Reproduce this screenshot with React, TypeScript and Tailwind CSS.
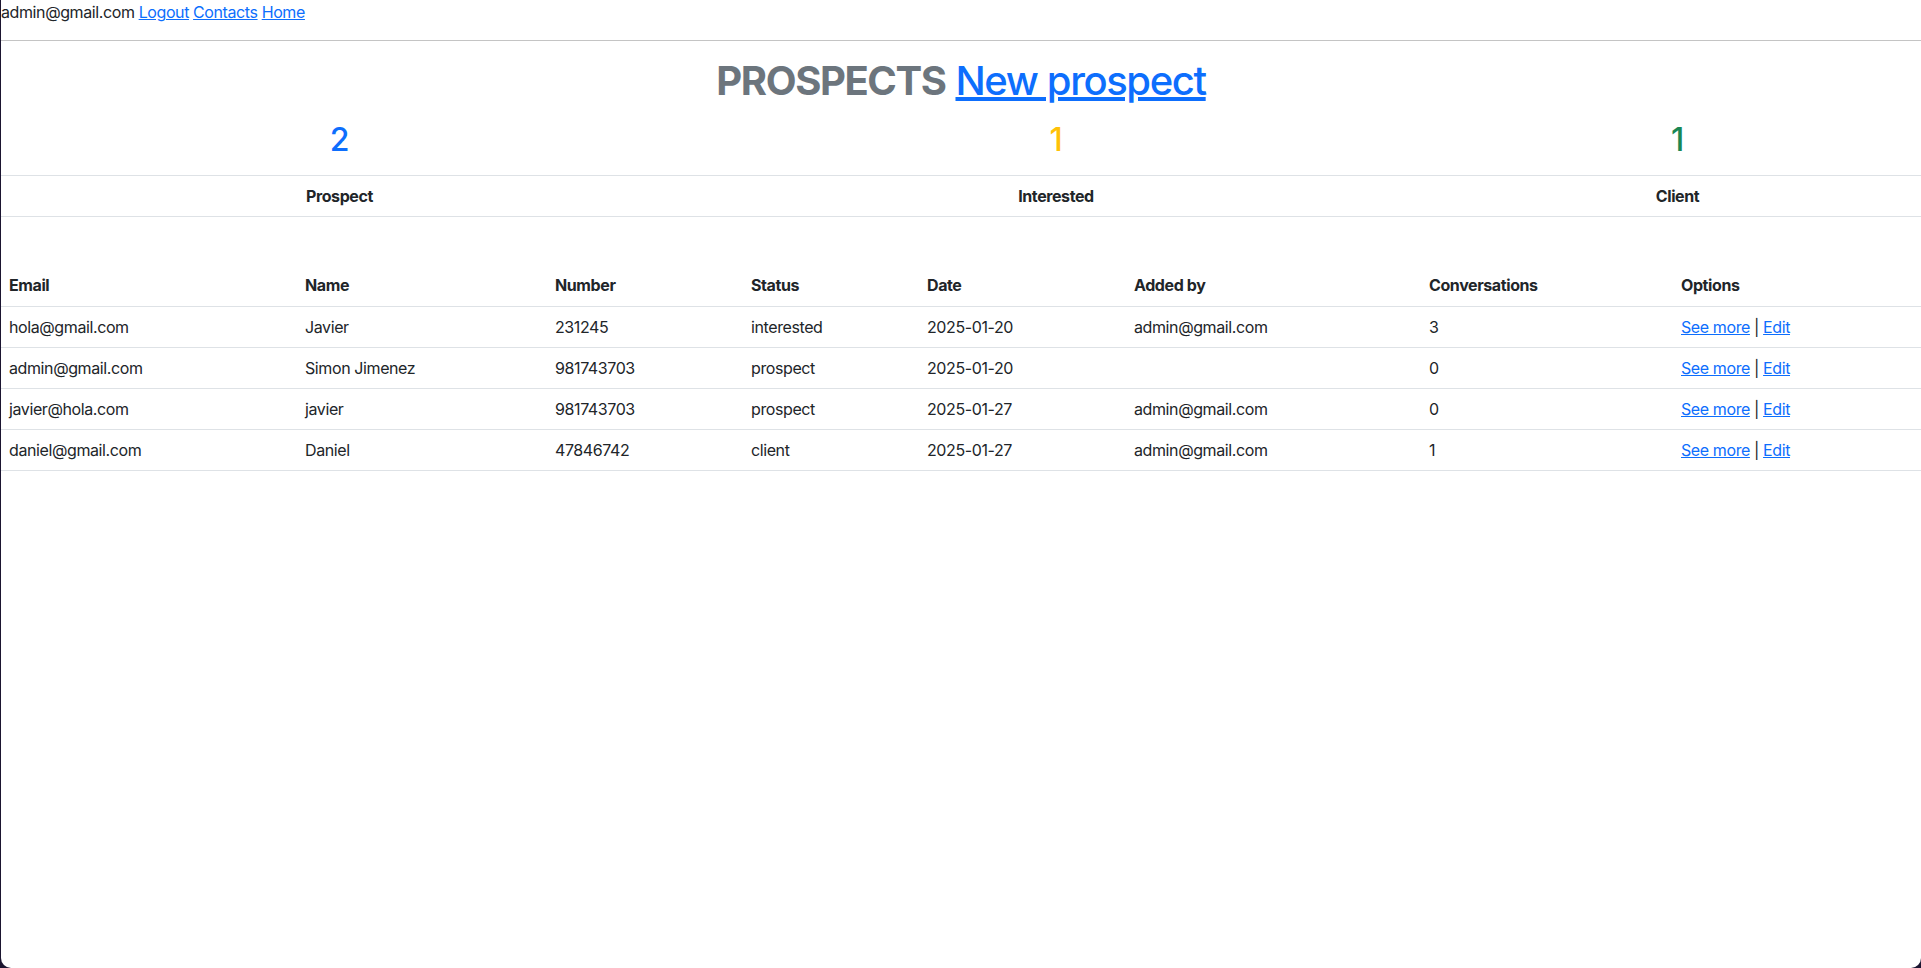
import React from "react";

const counts = [
  { value: 2, label: "Prospect", color: "text-[#0d6efd]", width: "w-[677px]" },
  { value: 1, label: "Interested", color: "text-[#ffc107]", width: "w-[756px]" },
  { value: 1, label: "Client", color: "text-[#198754]", width: "w-[487px]" },
];

const columns = [
  { title: "Email", width: "w-[296px]" },
  { title: "Name", width: "w-[250px]" },
  { title: "Number", width: "w-[196px]" },
  { title: "Status", width: "w-[176px]" },
  { title: "Date", width: "w-[207px]" },
  { title: "Added by", width: "w-[295px]" },
  { title: "Conversations", width: "w-[252px]" },
  { title: "Options", width: "w-[248px]" },
];

const prospects = [
  { email: "hola@gmail.com", name: "Javier", number: "231245", status: "interested", date: "2025-01-20", addedBy: "admin@gmail.com", conversations: 3 },
  { email: "admin@gmail.com", name: "Simon Jimenez", number: "981743703", status: "prospect", date: "2025-01-20", addedBy: "", conversations: 0 },
  { email: "javier@hola.com", name: "javier", number: "981743703", status: "prospect", date: "2025-01-27", addedBy: "admin@gmail.com", conversations: 0 },
  { email: "daniel@gmail.com", name: "Daniel", number: "47846742", status: "client", date: "2025-01-27", addedBy: "admin@gmail.com", conversations: 1 },
];

export default function App() {
  return (
    <div className="h-[968px] bg-[#1b1530] pl-px" style={{ fontFamily: "Inter, 'Noto Sans', sans-serif" }}>
      <div className="h-full bg-white rounded-b-[10px] text-[16px] leading-6 tracking-[-0.025em] text-[#212529]">
        {/* Top nav */}
        <div className="h-6">
          admin@gmail.com{" "}
          <a href="#" className="text-[#0d6efd] underline">Logout</a>{" "}
          <a href="#" className="text-[#0d6efd] underline">Contacts</a>{" "}
          <a href="#" className="text-[#0d6efd] underline">Home</a>
        </div>
        <hr className="mt-4 border-t border-[#c4c4c4]" />

        {/* Title */}
        <h1 className="mt-4 mb-2 text-center text-[40px] leading-[48px] tracking-[-0.035em]">
          <span className="font-bold text-[#6c757d]">PROSPECTS</span>{" "}
          <a href="#" className="font-medium text-[#0d6efd] underline">New prospect</a>
        </h1>

        {/* Counters */}
        <table className="table-fixed w-full border-collapse">
          <thead>
            <tr className="border-b border-[#dee2e6]">
              {counts.map((c) => (
                <th key={c.label} className={`${c.width} py-2 font-medium`}>
                  <div className={`${c.color} text-[32px] leading-[38px] mb-2`}>{c.value}</div>
                </th>
              ))}
            </tr>
          </thead>
          <tbody>
            <tr className="border-b border-[#dee2e6]">
              {counts.map((c) => (
                <th key={c.label} className="h-[41px] px-2 font-bold text-center">{c.label}</th>
              ))}
            </tr>
          </tbody>
        </table>

        {/* Prospects table */}
        <table className="table-fixed w-full border-collapse mt-12">
          <thead>
            <tr className="border-b border-[#dee2e6]">
              {columns.map((c) => (
                <th key={c.title} className={`${c.width} h-[41px] px-2 text-left font-bold`}>{c.title}</th>
              ))}
            </tr>
          </thead>
          <tbody>
            {prospects.map((p, i) => (
              <tr key={i} className="border-b border-[#dee2e6]">
                <td className="h-[41px] px-2">{p.email}</td>
                <td className="h-[41px] px-2">{p.name}</td>
                <td className="h-[41px] px-2">{p.number}</td>
                <td className="h-[41px] px-2">{p.status}</td>
                <td className="h-[41px] px-2">{p.date}</td>
                <td className="h-[41px] px-2">{p.addedBy}</td>
                <td className="h-[41px] px-2">{p.conversations}</td>
                <td className="h-[41px] px-2">
                  <a href="#" className="text-[#0d6efd] underline">See more</a> |{" "}
                  <a href="#" className="text-[#0d6efd] underline">Edit</a>
                </td>
              </tr>
            ))}
          </tbody>
        </table>
      </div>
    </div>
  );
}
